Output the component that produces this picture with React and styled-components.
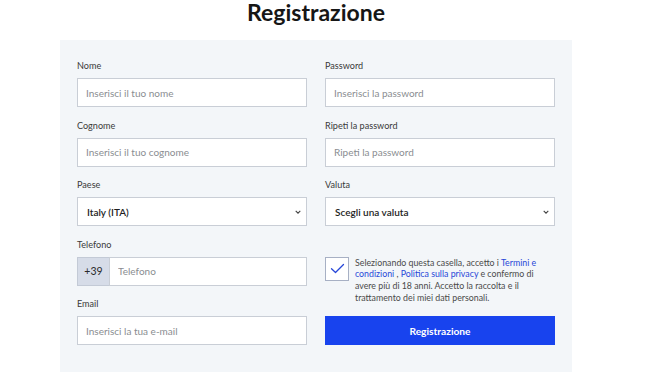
import React from "react";
import styled, { createGlobalStyle } from "styled-components";

const Global = createGlobalStyle`
  html, body { margin: 0; padding: 0; background: #ffffff; }
  body { font-family: "Lato", "Noto Sans", sans-serif; color: #222; }
  * { box-sizing: border-box; }
`;

const chevron =
  "url(\"data:image/svg+xml;utf8,<svg xmlns='http://www.w3.org/2000/svg' width='6' height='4' viewBox='0 0 6 4'><path d='M0.7 0.8 L3 3.1 L5.3 0.8' fill='none' stroke='%23444' stroke-width='1.1'/></svg>\")";

const Page = styled.div`
  width: 660px;
  padding-left: 60px;
`;

const Container = styled.div`
  width: 512px;
`;

const Title = styled.h1`
  margin: 0 0 16px;
  font-size: 23px;
  line-height: 24px;
  font-weight: 700;
  text-align: center;
  color: #161616;
`;

const Panel = styled.form`
  background: #f3f6f9;
  padding: 20px 17px 27px;
  display: grid;
  grid-template-columns: 230px 230px;
  grid-template-rows: repeat(5, 47px);
  column-gap: 18px;
  row-gap: 12.5px;
`;

const Field = styled.div`
  display: flex;
  flex-direction: column;
  gap: 6px;
`;

const Label = styled.label`
  font-size: 9.1px;
  line-height: 12px;
  color: #3a3a3a;
`;

const Input = styled.input`
  height: 29px;
  width: 100%;
  border: 1px solid #c9ced6;
  background: #fff;
  padding: 0 8px;
  font-family: inherit;
  font-size: 10px;
  color: #222;
  outline: none;
  &::placeholder { color: #8a8d91; }
`;

const Select = styled.select`
  appearance: none;
  -webkit-appearance: none;
  height: 29px;
  width: 100%;
  border: 1px solid #c9ced6;
  border-radius: 0;
  background: #fff ${chevron} no-repeat right 5px center;
  padding: 0 9px;
  font-family: inherit;
  font-size: 10px;
  font-weight: 600;
  color: #1e1e1e;
  outline: none;
`;

const PhoneGroup = styled.div`
  display: flex;
  height: 29px;
`;

const Prefix = styled.span`
  width: 32px;
  flex: none;
  display: flex;
  align-items: center;
  justify-content: center;
  background: #d6dce8;
  border: 1px solid #c3cad6;
  border-right: none;
  font-size: 10.5px;
  color: #2a2a2a;
`;

const Consent = styled.div`
  padding-top: 18px;
  display: flex;
  gap: 6px;
  align-items: flex-start;
`;

const CheckBox = styled.span`
  width: 24px;
  height: 24px;
  flex: none;
  background: #fff;
  border: 1px solid #a7b0c4;
  display: flex;
  align-items: center;
  justify-content: center;
`;

const ConsentText = styled.p`
  margin: 0;
  font-size: 8.8px;
  line-height: 11.8px;
  color: #4a4a4a;
`;

const Link = styled.a`
  color: #2747d8;
  text-decoration: none;
`;

const ButtonCell = styled.div`
  display: flex;
  flex-direction: column;
  justify-content: flex-end;
`;

const Button = styled.button`
  height: 29px;
  width: 100%;
  border: none;
  background: #1843ee;
  color: #fff;
  font-family: inherit;
  font-size: 10.2px;
  font-weight: 700;
`;

export default function App() {
  return (
    <Page>
      <Global />
      <Container>
        <Title>Registrazione</Title>
        <Panel onSubmit={(e) => e.preventDefault()}>
          <Field>
            <Label>Nome</Label>
            <Input placeholder="Inserisci il tuo nome" />
          </Field>
          <Field>
            <Label>Password</Label>
            <Input type="password" placeholder="Inserisci la password" />
          </Field>
          <Field>
            <Label>Cognome</Label>
            <Input placeholder="Inserisci il tuo cognome" />
          </Field>
          <Field>
            <Label>Ripeti la password</Label>
            <Input type="password" placeholder="Ripeti la password" />
          </Field>
          <Field>
            <Label>Paese</Label>
            <Select defaultValue="ITA">
              <option value="ITA">Italy (ITA)</option>
            </Select>
          </Field>
          <Field>
            <Label>Valuta</Label>
            <Select defaultValue="">
              <option value="">Scegli una valuta</option>
            </Select>
          </Field>
          <Field>
            <Label>Telefono</Label>
            <PhoneGroup>
              <Prefix>+39</Prefix>
              <Input placeholder="Telefono" />
            </PhoneGroup>
          </Field>
          <Consent>
            <CheckBox>
              <svg width="15" height="11" viewBox="0 0 15 11" fill="none">
                <path d="M1.5 5.8 L5.5 9.5 L13.5 1.5" stroke="#2747d8" strokeWidth="1.3" strokeLinecap="round" strokeLinejoin="round" />
              </svg>
            </CheckBox>
            <ConsentText>
              Selezionando questa casella, accetto i <Link href="#">Termini e condizioni</Link> , <Link href="#">Politica sulla privacy</Link> e confermo di avere più di 18 anni. Accetto la raccolta e il trattamento dei miei dati personali.
            </ConsentText>
          </Consent>
          <Field>
            <Label>Email</Label>
            <Input type="email" placeholder="Inserisci la tua e-mail" />
          </Field>
          <ButtonCell>
            <Button type="submit">Registrazione</Button>
          </ButtonCell>
        </Panel>
      </Container>
    </Page>
  );
}
